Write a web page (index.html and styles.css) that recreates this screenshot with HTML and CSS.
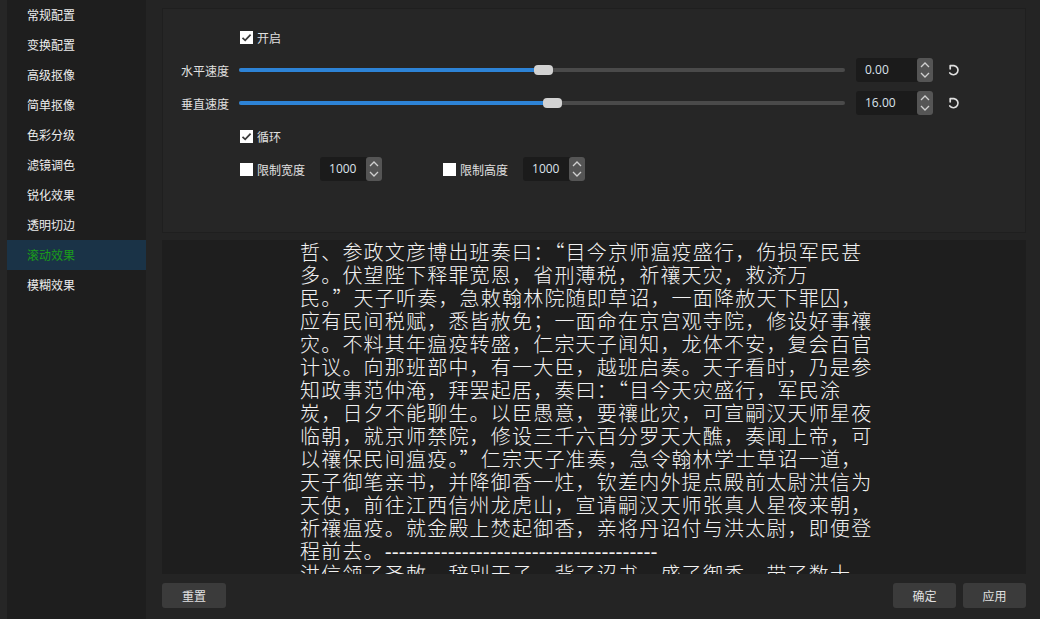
FILE: index.html
```html
<!DOCTYPE html>
<html lang="zh-CN">
<head>
    <meta charset="UTF-8">
    <meta name="viewport" content="width=device-width, initial-scale=1.0">
    <title>滚动效果</title>
    <link rel="stylesheet" href="styles.css">
</head>
<body>
    <div class="window">
        <div class="edge"></div>

        <!-- Filter list -->
        <nav class="sidebar">
            <div class="nav-item">常规配置</div>
            <div class="nav-item">变换配置</div>
            <div class="nav-item">高级抠像</div>
            <div class="nav-item">简单抠像</div>
            <div class="nav-item">色彩分级</div>
            <div class="nav-item">滤镜调色</div>
            <div class="nav-item">锐化效果</div>
            <div class="nav-item">透明切边</div>
            <div class="nav-item active">滚动效果</div>
            <div class="nav-item">模糊效果</div>
        </nav>

        <main class="content">
            <!-- Scroll settings -->
            <section class="settings">
                <div class="row indent">
                    <label class="check"><span class="box checked"><svg viewBox="0 0 13 13"><path d="M2.5 6.8 L5.2 9.4 L10.6 3.6"/></svg></span>开启</label>
                </div>
                <div class="row">
                    <span class="label">水平速度</span>
                    <div class="slider">
                        <div class="fill" style="width: 304px"></div>
                        <div class="handle" style="left: 295px"></div>
                    </div>
                    <div class="spin wide">
                        <span class="value">0.00</span>
                        <span class="arrows"><svg viewBox="0 0 16 24"><path d="M4 9 L8 5 L12 9 M4 15 L8 19 L12 15"/></svg></span>
                    </div>
                    <svg class="reset" viewBox="0 0 14 14"><path d="M3.2 5.8 V2.6 H7 A4.6 4.6 0 1 1 2.8 10"/></svg>
                </div>
                <div class="row">
                    <span class="label">垂直速度</span>
                    <div class="slider">
                        <div class="fill" style="width: 313px"></div>
                        <div class="handle" style="left: 304px"></div>
                    </div>
                    <div class="spin wide">
                        <span class="value">16.00</span>
                        <span class="arrows"><svg viewBox="0 0 16 24"><path d="M4 9 L8 5 L12 9 M4 15 L8 19 L12 15"/></svg></span>
                    </div>
                    <svg class="reset" viewBox="0 0 14 14"><path d="M3.2 5.8 V2.6 H7 A4.6 4.6 0 1 1 2.8 10"/></svg>
                </div>
                <div class="row indent">
                    <label class="check"><span class="box checked"><svg viewBox="0 0 13 13"><path d="M2.5 6.8 L5.2 9.4 L10.6 3.6"/></svg></span>循环</label>
                </div>
                <div class="row indent">
                    <label class="check"><span class="box"></span>限制宽度</label>
                    <div class="spin small">
                        <span class="value">1000</span>
                        <span class="arrows"><svg viewBox="0 0 16 24"><path d="M4 9 L8 5 L12 9 M4 15 L8 19 L12 15"/></svg></span>
                    </div>
                    <label class="check second"><span class="box"></span>限制高度</label>
                    <div class="spin small">
                        <span class="value">1000</span>
                        <span class="arrows"><svg viewBox="0 0 16 24"><path d="M4 9 L8 5 L12 9 M4 15 L8 19 L12 15"/></svg></span>
                    </div>
                </div>
            </section>

            <!-- Scrolling text preview -->
            <section class="preview">
                <div class="line">哲、参政文彦博出班奏曰：“目今京师瘟疫盛行，伤损军民甚</div>
                <div class="line">多。伏望陛下释罪宽恩，省刑薄税，祈禳天灾，救济万</div>
                <div class="line">民。”天子听奏，急敕翰林院随即草诏，一面降赦天下罪囚，</div>
                <div class="line">应有民间税赋，悉皆赦免；一面命在京宫观寺院，修设好事禳</div>
                <div class="line">灾。不料其年瘟疫转盛，仁宗天子闻知，龙体不安，复会百官</div>
                <div class="line">计议。向那班部中，有一大臣，越班启奏。天子看时，乃是参</div>
                <div class="line">知政事范仲淹，拜罢起居，奏曰：“目今天灾盛行，军民涂</div>
                <div class="line">炭，日夕不能聊生。以臣愚意，要禳此灾，可宣嗣汉天师星夜</div>
                <div class="line">临朝，就京师禁院，修设三千六百分罗天大醮，奏闻上帝，可</div>
                <div class="line">以禳保民间瘟疫。”仁宗天子准奏，急令翰林学士草诏一道，</div>
                <div class="line">天子御笔亲书，并降御香一炷，钦差内外提点殿前太尉洪信为</div>
                <div class="line">天使，前往江西信州龙虎山，宣请嗣汉天师张真人星夜来朝，</div>
                <div class="line">祈禳瘟疫。就金殿上焚起御香，亲将丹诏付与洪太尉，即便登</div>
                <div class="line">程前去。<span class="dash">---------------------------------------</span></div>
                <div class="line">洪信领了圣敕，辞别天子，背了诏书，盛了御香，带了数十</div>
            </section>

            <footer class="actions">
                <button class="btn">重置</button>
                <div class="right">
                    <button class="btn">确定</button>
                    <button class="btn">应用</button>
                </div>
            </footer>
        </main>
    </div>
</body>
</html>
```

FILE: styles.css
```css
* {
    box-sizing: border-box;
}
body {
    margin: 0;
    width: 1040px;
    height: 619px;
    overflow: hidden;
    background-color: #242424;
    color: #e4e4e4;
    font-family: "Noto Sans CJK SC", "Noto Sans", sans-serif;
    font-size: 12px;
}
.window {
    display: flex;
    height: 619px;
}
.edge {
    width: 7px;
    background-color: #262626;
}
.sidebar {
    width: 139px;
    background-color: #1e1e1e;
}
.nav-item {
    height: 30px;
    line-height: 30px;
    padding-left: 20px;
    color: #ececec;
}
.nav-item.active {
    background-color: #1a3347;
    color: #1a9e1a;
}
.content {
    width: 864px;
    margin-left: 16px;
    padding-top: 8px;
    display: flex;
    flex-direction: column;
}
.settings {
    height: 225px;
    background-color: #262626;
    border: 1px solid #1f1f1f;
    padding-top: 16px;
    display: flex;
    flex-direction: column;
    gap: 9px;
}
.row {
    height: 24px;
    display: flex;
    align-items: center;
}
.row.indent {
    padding-left: 77px;
}
.label {
    width: 66px;
    margin-right: 10px;
    text-align: right;
    color: #e0e0e0;
}
.check {
    display: flex;
    align-items: center;
    gap: 4px;
    color: #e0e0e0;
}
.check.second {
    margin-left: 61px;
}
.box {
    width: 13px;
    height: 13px;
    background-color: #ffffff;
    display: flex;
}
.box svg {
    width: 13px;
    height: 13px;
    fill: none;
    stroke: #3a3a3a;
    stroke-width: 1.7;
}
.slider {
    position: relative;
    width: 606px;
    height: 4px;
    margin-right: 11px;
    background-color: #4a4a4a;
    border-radius: 2px;
}
.fill {
    height: 4px;
    background-color: #2d83d6;
    border-radius: 2px;
}
.handle {
    position: absolute;
    top: -3px;
    width: 19px;
    height: 10px;
    background-color: #d2d2d2;
    border-radius: 4px;
}
.spin {
    height: 24px;
    display: flex;
    justify-content: space-between;
    background-color: #1b1b1b;
    border-radius: 3px;
}
.spin.wide {
    width: 77px;
}
.spin.small {
    width: 62px;
}
.row .check + .spin {
    margin-left: 15px;
}
.value {
    padding-left: 9px;
    line-height: 24px;
    font-family: "Open Sans", "Noto Sans", sans-serif;
    font-size: 12px;
    color: #dbe3ec;
}
.arrows {
    width: 16px;
    height: 24px;
    background-color: #555555;
    border-radius: 3px;
}
.arrows svg {
    width: 16px;
    height: 24px;
    fill: none;
    stroke: #d0d0d0;
    stroke-width: 1.3;
}
.reset {
    width: 14px;
    height: 14px;
    margin-left: 14px;
    fill: none;
    stroke: #e0e0e0;
    stroke-width: 1.7;
    stroke-linecap: round;
    stroke-linejoin: round;
}
.preview {
    height: 334px;
    margin-top: 7px;
    background-color: #1e1e1e;
    padding-left: 138px;
    overflow: hidden;
    color: #f2f2f2;
    font-size: 20px;
    line-height: 23px;
    letter-spacing: 1.2px;
    font-weight: 300;
}
.line {
    height: 23px;
    white-space: nowrap;
}
.dash {
    font-family: "Liberation Sans", sans-serif;
    font-size: 21px;
    letter-spacing: 0;
}
.actions {
    margin-top: 9px;
    display: flex;
    justify-content: space-between;
}
.right {
    display: flex;
    gap: 7px;
}
.btn {
    width: 63px;
    height: 25px;
    border: none;
    border-radius: 3px;
    background-color: #3b3b3b;
    color: #e0e0e0;
    font-family: "Noto Sans CJK SC", sans-serif;
    font-size: 12px;
    padding: 0;
}
.actions > .btn {
    width: 64px;
}
```
